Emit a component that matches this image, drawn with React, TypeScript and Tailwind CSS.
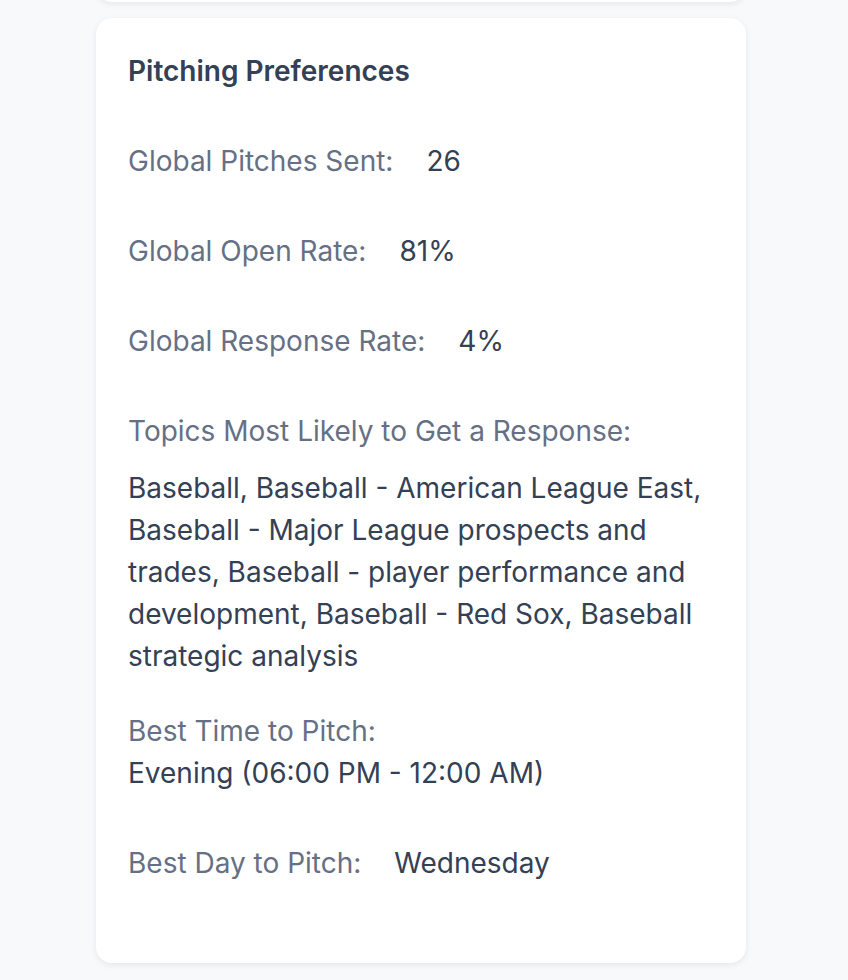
import React from 'react'

const stats = [
  { label: 'Global Pitches Sent:', value: '26' },
  { label: 'Global Open Rate:', value: '81%' },
  { label: 'Global Response Rate:', value: '4%' },
]

const topics =
  'Baseball, Baseball - American League East, Baseball - Major League prospects and trades, Baseball - player performance and development, Baseball - Red Sox, Baseball strategic analysis'

export default function App() {
  return (
    <div
      className="min-h-screen overflow-hidden bg-[#f8f9fb] text-[28px] leading-[42px]"
      style={{ fontFamily: 'Inter, "Noto Sans", sans-serif' }}
    >
      <div className="flex w-[650px] flex-col gap-4 ml-[96px]">
        {/* bottom of the card above */}
        <div className="-mt-[18px] h-[20px] rounded-b-2xl bg-white shadow-[0_2px_6px_rgba(16,24,40,0.08)]" />

        <div className="rounded-2xl bg-white px-8 pt-8 pb-[79px] shadow-[0_2px_6px_rgba(16,24,40,0.08)]">
          <h2 className="font-semibold text-[#344054]">Pitching Preferences</h2>

          <div className="mt-12 flex flex-col gap-12">
            {stats.map(s => (
              <div key={s.label} className="flex gap-[33px]">
                <span className="text-[#667085]">{s.label}</span>
                <span className="text-[#344054]">{s.value}</span>
              </div>
            ))}

            <div>
              <p className="text-[#667085]">Topics Most Likely to Get a Response:</p>
              <p className="mt-[15px] text-[#344054]">{topics}</p>
            </div>
          </div>

          <div className="mt-[33px]">
            <p className="text-[#667085]">Best Time to Pitch:</p>
            <p className="text-[#344054]">Evening (06:00 PM - 12:00 AM)</p>
          </div>

          <div className="mt-12 flex gap-[33px]">
            <span className="text-[#667085]">Best Day to Pitch:</span>
            <span className="text-[#344054]">Wednesday</span>
          </div>
        </div>
      </div>
    </div>
  )
}
